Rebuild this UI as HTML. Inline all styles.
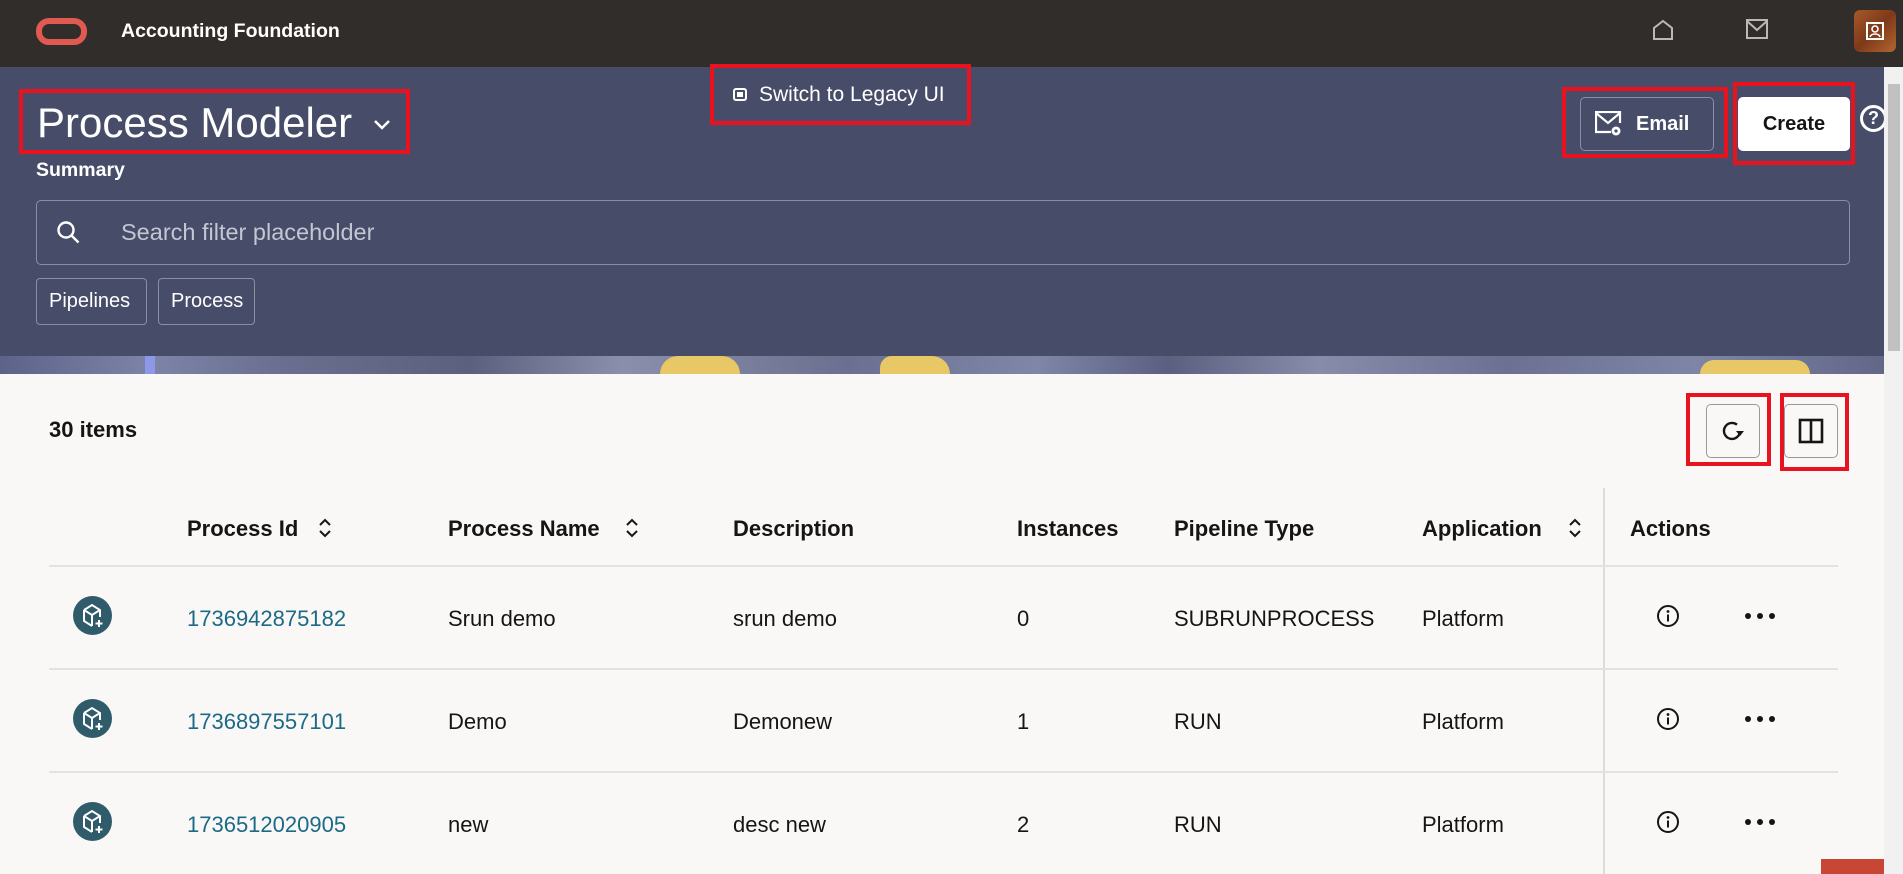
<!DOCTYPE html>
<html><head><meta charset="utf-8"><style>
*{box-sizing:border-box;margin:0;padding:0}
body{width:1903px;height:874px;overflow:hidden;background:#f9f8f6;font-family:"Liberation Sans",sans-serif;position:relative;color:#161513}
.a{position:absolute}
.top{left:0;top:0;width:1903px;height:67px;background:#312d2a}
.hdr{left:0;top:67px;width:1884px;height:289px;background:#474c69}
.band{left:0;top:356px;width:1884px;height:18px;background:linear-gradient(90deg,#5d6388 0,#7d84a8 8%,#6a6f8f 15%,#5b607e 25%,#8a8fab 33%,#6b7090 45%,#7f86a6 55%,#5b6080 62%,#868caa 70%,#6c7192 80%,#7e85a5 90%,#626788 100%)}
.red{border:4px solid #e8131f;position:absolute}
.w{color:#fff}
.th{top:516px;font-size:22px;font-weight:bold;color:#161513}
.td{font-size:22px;color:#161513}
.lnk{color:#1c6a87}
.hl{left:49px;width:1789px;height:2px;background:#e4e2df}
.ic{width:39px;height:39px;border-radius:50%;background:#2f5b6b;left:73px}
.sb{left:1884px;top:67px;width:19px;height:807px;background:#f1f1f1}
</style></head><body>
<div class="a top"></div>
<div class="a" style="left:36px;top:18px;width:51px;height:27px;border:6px solid #e05a51;border-radius:13px"></div>
<div class="a w" style="left:121px;top:20px;font-size:19.5px;font-weight:bold">Accounting Foundation</div>
<svg class="a" style="left:1651px;top:18px" width="24" height="24" viewBox="0 0 24 24"><path d="M3 21V10L12 3l9 7v11z" fill="none" stroke="#bdb8b3" stroke-width="2"/></svg>
<svg class="a" style="left:1746px;top:19px" width="22" height="20" viewBox="0 0 22 20"><rect x="1" y="1" width="20" height="18" fill="none" stroke="#bdb8b3" stroke-width="2"/><path d="M1 2l10 9 10-9" fill="none" stroke="#bdb8b3" stroke-width="2"/></svg>
<div class="a" style="left:1854px;top:10px;width:42px;height:42px;border-radius:6px;background:linear-gradient(135deg,#a8582a,#7d3a19 50%,#b56530)"></div>
<svg class="a" style="left:1866px;top:22px" width="18" height="18" viewBox="0 0 18 18"><rect x="1" y="1" width="16" height="16" fill="none" stroke="#fff" stroke-width="2"/><circle cx="9" cy="7" r="3" fill="none" stroke="#fff" stroke-width="1.6"/><path d="M4 15c1-4 9-4 10 0" fill="none" stroke="#fff" stroke-width="1.6"/></svg>
<div class="a hdr"></div>
<div class="a band"></div>
<div class="a" style="left:660px;top:356px;width:80px;height:18px;background:#e8c766;border-radius:30px 30px 0 0"></div>
<div class="a" style="left:880px;top:356px;width:70px;height:18px;background:#e8c766;border-radius:20px 30px 0 0"></div>
<div class="a" style="left:1700px;top:360px;width:110px;height:14px;background:#e8c766;border-radius:30px 30px 0 0"></div>
<div class="a" style="left:145px;top:356px;width:10px;height:18px;background:#8e98ea"></div>
<div class="red" style="left:19px;top:89px;width:391px;height:65px"></div>
<div class="a w" style="left:37px;top:99px;font-size:42px">Process Modeler</div>
<svg class="a" style="left:373px;top:119px" width="18" height="12" viewBox="0 0 18 12"><path d="M2 2l7 7 7-7" fill="none" stroke="#fff" stroke-width="2.5"/></svg>
<div class="red" style="left:710px;top:64px;width:261px;height:61px"></div>
<div class="a" style="left:733px;top:88px;width:14px;height:13px;border:2px solid #fff;border-radius:3px"><div style="margin:2px;width:6px;height:5px;background:#fff"></div></div>
<div class="a w" style="left:759px;top:83px;font-size:21px">Switch to Legacy UI</div>
<div class="a w" style="left:36px;top:159px;font-size:19.5px;font-weight:bold">Summary</div>
<div class="a" style="left:36px;top:200px;width:1814px;height:65px;border:1px solid #8a8ea6;border-radius:5px"></div>
<svg class="a" style="left:56px;top:220px" width="26" height="26" viewBox="0 0 26 26"><circle cx="10" cy="10" r="7.5" fill="none" stroke="#fff" stroke-width="2.4"/><path d="M15.5 15.5l7 7" stroke="#fff" stroke-width="2.4"/></svg>
<div class="a" style="left:121px;top:219px;font-size:23.5px;color:#c4c6d2">Search filter placeholder</div>
<div class="a w" style="left:36px;top:278px;width:111px;height:47px;border:1px solid #8a8ea6;border-radius:4px;font-size:20px;padding:11px 0 0 12px">Pipelines</div>
<div class="a w" style="left:158px;top:278px;width:97px;height:47px;border:1px solid #8a8ea6;border-radius:4px;font-size:20px;padding:11px 0 0 12px">Process</div>
<div class="red" style="left:1562px;top:87px;width:166px;height:71px"></div>
<div class="a" style="left:1580px;top:97px;width:134px;height:54px;border:1px solid #8a8ea6;border-radius:5px"></div>
<svg class="a" style="left:1595px;top:111px" width="28" height="26" viewBox="0 0 28 26"><path d="M16 21H1V1h24v11" fill="none" stroke="#fff" stroke-width="2.2"/><path d="M1 2l12 10 12-10" fill="none" stroke="#fff" stroke-width="2.2"/><circle cx="21" cy="20" r="4.5" fill="#fff"/><circle cx="21" cy="20" r="1.6" fill="#474c69"/></svg>
<div class="a w" style="left:1636px;top:113px;font-size:20px;font-weight:bold">Email</div>
<div class="red" style="left:1733px;top:82px;width:122px;height:83px"></div>
<div class="a" style="left:1738px;top:97px;width:112px;height:54px;background:#fff;border-radius:5px;font-size:20px;font-weight:bold;text-align:center;padding-top:16px">Create</div>
<div class="a" style="left:1860px;top:105px;width:27px;height:27px;border:3px solid #fff;border-radius:50%;color:#fff;font-weight:bold;font-size:18px;text-align:center;line-height:21px">?</div>
<div class="a sb"></div>
<div class="a" style="left:1888px;top:84px;width:12px;height:267px;background:#c1c1c1"></div>
<div class="a" style="left:49px;top:417px;font-size:22px;font-weight:bold">30 items</div>
<div class="red" style="left:1686px;top:393px;width:85px;height:73px"></div>
<div class="a" style="left:1706px;top:404px;width:54px;height:54px;border:1px solid #999;border-radius:5px"></div>
<svg class="a" style="left:1720px;top:418px" width="26" height="26" viewBox="0 0 26 26"><path d="M20 13a8 8 0 1 1-3-6.3" fill="none" stroke="#161513" stroke-width="2.4"/><path d="M16 13h8l-4 5z" fill="#161513"/></svg>
<div class="red" style="left:1780px;top:393px;width:69px;height:78px"></div>
<div class="a" style="left:1784px;top:404px;width:54px;height:54px;border:1px solid #999;border-radius:5px"></div>
<svg class="a" style="left:1798px;top:418px" width="26" height="26" viewBox="0 0 26 26"><rect x="2" y="2" width="22" height="22" fill="none" stroke="#161513" stroke-width="2.6"/><path d="M13 2v22" stroke="#161513" stroke-width="2.6"/></svg>
<div class="a" style="left:1603px;top:488px;width:2px;height:386px;background:#dedcd9"></div>
<div class="a th" style="left:187px">Process Id</div>
<div class="a th" style="left:448px">Process Name</div>
<div class="a th" style="left:733px">Description</div>
<div class="a th" style="left:1017px">Instances</div>
<div class="a th" style="left:1174px">Pipeline Type</div>
<div class="a th" style="left:1422px">Application</div>
<div class="a th" style="left:1630px">Actions</div>
<svg class="a" style="left:318px;top:517px" width="14" height="22" viewBox="0 0 14 22"><path d="M2 8l5-5 5 5M2 14l5 5 5-5" fill="none" stroke="#161513" stroke-width="2"/></svg>
<svg class="a" style="left:625px;top:517px" width="14" height="22" viewBox="0 0 14 22"><path d="M2 8l5-5 5 5M2 14l5 5 5-5" fill="none" stroke="#161513" stroke-width="2"/></svg>
<svg class="a" style="left:1568px;top:517px" width="14" height="22" viewBox="0 0 14 22"><path d="M2 8l5-5 5 5M2 14l5 5 5-5" fill="none" stroke="#161513" stroke-width="2"/></svg>
<div class="a hl" style="top:565px"></div>
<div class="a hl" style="top:668px"></div>
<div class="a hl" style="top:771px"></div>

<div class="a ic" style="top:596px"></div>
<div class="a ic" style="top:699px"></div>
<div class="a ic" style="top:802px"></div>
<svg class="a" style="left:80px;top:602px" width="26" height="28" viewBox="0 0 26 28"><path d="M4 8l8-5 8 5v7M4 8v11l8 5M4 8l8 5 8-5M12 13v11" fill="none" stroke="#fff" stroke-width="2"/><path d="M19 18v7M15.5 21.5h7" stroke="#fff" stroke-width="2"/></svg>
<svg class="a" style="left:80px;top:705px" width="26" height="28" viewBox="0 0 26 28"><path d="M4 8l8-5 8 5v7M4 8v11l8 5M4 8l8 5 8-5M12 13v11" fill="none" stroke="#fff" stroke-width="2"/><path d="M19 18v7M15.5 21.5h7" stroke="#fff" stroke-width="2"/></svg>
<svg class="a" style="left:80px;top:808px" width="26" height="28" viewBox="0 0 26 28"><path d="M4 8l8-5 8 5v7M4 8v11l8 5M4 8l8 5 8-5M12 13v11" fill="none" stroke="#fff" stroke-width="2"/><path d="M19 18v7M15.5 21.5h7" stroke="#fff" stroke-width="2"/></svg>

<div class="a td lnk" style="left:187px;top:606px">1736942875182</div>
<div class="a td" style="left:448px;top:606px">Srun demo</div>
<div class="a td" style="left:733px;top:606px">srun demo</div>
<div class="a td" style="left:1017px;top:606px">0</div>
<div class="a td" style="left:1174px;top:606px">SUBRUNPROCESS</div>
<div class="a td" style="left:1422px;top:606px">Platform</div>

<div class="a td lnk" style="left:187px;top:709px">1736897557101</div>
<div class="a td" style="left:448px;top:709px">Demo</div>
<div class="a td" style="left:733px;top:709px">Demonew</div>
<div class="a td" style="left:1017px;top:709px">1</div>
<div class="a td" style="left:1174px;top:709px">RUN</div>
<div class="a td" style="left:1422px;top:709px">Platform</div>

<div class="a td lnk" style="left:187px;top:812px">1736512020905</div>
<div class="a td" style="left:448px;top:812px">new</div>
<div class="a td" style="left:733px;top:812px">desc new</div>
<div class="a td" style="left:1017px;top:812px">2</div>
<div class="a td" style="left:1174px;top:812px">RUN</div>
<div class="a td" style="left:1422px;top:812px">Platform</div>

<svg class="a" style="left:1656px;top:604px" width="24" height="24" viewBox="0 0 24 24"><circle cx="12" cy="12" r="10" fill="none" stroke="#161513" stroke-width="2"/><circle cx="12" cy="7.5" r="1.4" fill="#161513"/><path d="M12 10.5v7" stroke="#161513" stroke-width="2"/></svg>
<svg class="a" style="left:1656px;top:707px" width="24" height="24" viewBox="0 0 24 24"><circle cx="12" cy="12" r="10" fill="none" stroke="#161513" stroke-width="2"/><circle cx="12" cy="7.5" r="1.4" fill="#161513"/><path d="M12 10.5v7" stroke="#161513" stroke-width="2"/></svg>
<svg class="a" style="left:1656px;top:810px" width="24" height="24" viewBox="0 0 24 24"><circle cx="12" cy="12" r="10" fill="none" stroke="#161513" stroke-width="2"/><circle cx="12" cy="7.5" r="1.4" fill="#161513"/><path d="M12 10.5v7" stroke="#161513" stroke-width="2"/></svg>
<svg class="a" style="left:1744px;top:612px" width="32" height="8" viewBox="0 0 32 8"><circle cx="4" cy="4" r="3" fill="#161513"/><circle cx="16" cy="4" r="3" fill="#161513"/><circle cx="28" cy="4" r="3" fill="#161513"/></svg>
<svg class="a" style="left:1744px;top:715px" width="32" height="8" viewBox="0 0 32 8"><circle cx="4" cy="4" r="3" fill="#161513"/><circle cx="16" cy="4" r="3" fill="#161513"/><circle cx="28" cy="4" r="3" fill="#161513"/></svg>
<svg class="a" style="left:1744px;top:818px" width="32" height="8" viewBox="0 0 32 8"><circle cx="4" cy="4" r="3" fill="#161513"/><circle cx="16" cy="4" r="3" fill="#161513"/><circle cx="28" cy="4" r="3" fill="#161513"/></svg>
<div class="a" style="left:1821px;top:859px;width:63px;height:15px;background:#c74634"></div>
</body></html>
